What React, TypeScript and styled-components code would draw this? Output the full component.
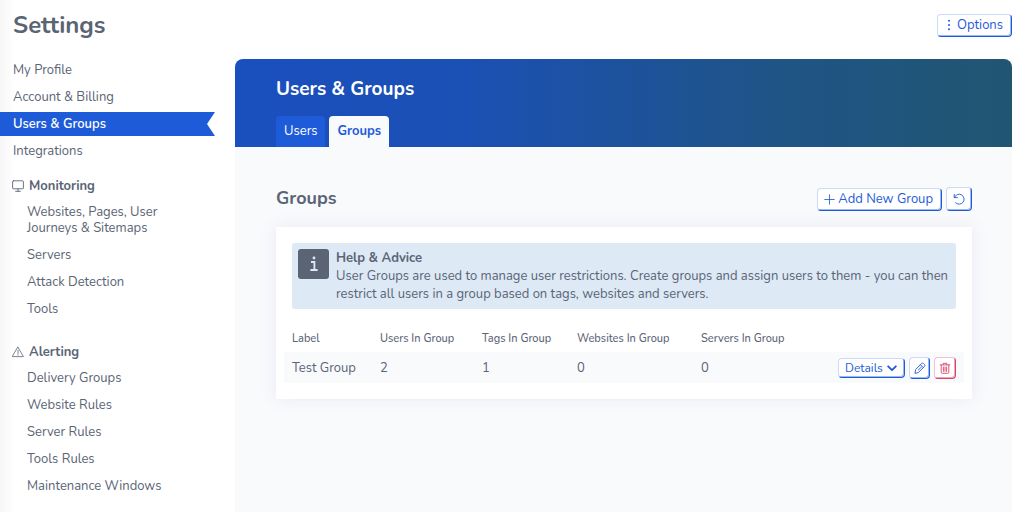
import React from "react";
import styled, { createGlobalStyle, css } from "styled-components";

const font = `Nunito, "Open Sans", "Noto Sans", sans-serif`;
const blue = "#1d5bd8";
const slate = "#5a6475";
const pale = "#f9fafc";
const red = "#d6456b";

const GlobalStyle = createGlobalStyle`
  *, *::before, *::after { box-sizing: border-box; }
  body { margin: 0; background: #fff; color: ${slate}; font-family: ${font}; font-size: 13px; line-height: 18px; }
  h1, h2, h3, p { margin: 0; }
  a { color: inherit; text-decoration: none; }
  button { font-family: inherit; cursor: pointer; }
`;

const Page = styled.div`
  display: flex;
  flex-direction: column;
  min-height: 100vh;
  background: linear-gradient(to right, #f6f6f6, #fff 14px);
`;

const TopBar = styled.header`
  display: flex;
  align-items: center;
  justify-content: space-between;
  height: 50px;
  padding: 0 12px 0 13px;
`;

const PageTitle = styled.h1`
  font-size: 24px;
  line-height: 30px;
  font-weight: 700;
`;

const Columns = styled.div`
  display: flex;
  flex: 1;
  padding: 8px 12px 0 0;
`;

const Sidebar = styled.nav`
  flex: 0 0 215px;
  margin-right: 20px;
  padding-bottom: 12px;
`;

const NavList = styled.ul`
  display: flex;
  flex-direction: column;
  gap: 3px;
  margin: 0;
  padding: 0;
  list-style: none;
`;

const NavLink = styled.a<{ $nested?: boolean; $active?: boolean }>`
  display: block;
  padding: 4px 40px 4px ${(p) => (p.$nested ? 27 : 13)}px;
  line-height: 16px;
  ${(p) =>
    p.$active &&
    css`
      background: ${blue};
      color: #fff;
      font-weight: 600;
      clip-path: polygon(0 0, 100% 0, calc(100% - 8px) 50%, 100% 100%, 0 100%);
    `}
`;

const NavHeading = styled.h2<{ $gap: number }>`
  display: flex;
  align-items: center;
  gap: 5px;
  margin: ${(p) => p.$gap}px 0 2px;
  padding: 4px 12px;
  font-size: 13px;
  line-height: 16px;
  font-weight: 700;
`;

const Panel = styled.main`
  flex: 1;
  min-width: 0;
  margin-top: 1px;
  border-radius: 8px 8px 0 0;
  overflow: hidden;
  background: ${pale};
`;

const Banner = styled.div`
  padding: 17px 40px 0 41px;
  background: linear-gradient(to right, #1a4fbf, #1b50b4 30%, #1f5488 68%, #215672);
`;

const BannerTitle = styled.h2`
  color: #fff;
  font-size: 19px;
  line-height: 26px;
  font-weight: 700;
`;

const Tabs = styled.div`
  display: flex;
  gap: 4px;
  margin-top: 14px;
`;

const Tab = styled.button<{ $active?: boolean }>`
  height: 31px;
  padding: 0 8px 2px;
  border: 0;
  border-radius: 4px 4px 0 0;
  background: ${(p) => (p.$active ? pale : blue)};
  color: ${(p) => (p.$active ? blue : "#fff")};
  font-size: 13px;
  font-weight: ${(p) => (p.$active ? 700 : 400)};
`;

const Section = styled.section`
  padding: 40px 40px 40px 41px;
`;

const SectionHead = styled.div`
  display: flex;
  align-items: center;
  justify-content: space-between;
  height: 24px;
  margin-bottom: 16px;
`;

const SectionTitle = styled.h3`
  font-size: 18px;
  line-height: 22px;
  padding-bottom: 2px;
  font-weight: 700;
`;

const Actions = styled.div`
  display: flex;
  align-items: center;
  justify-content: flex-end;
  gap: 4px;
`;

const Button = styled.button<{ $danger?: boolean; $small?: boolean }>`
  display: inline-flex;
  align-items: center;
  justify-content: center;
  gap: ${(p) => (p.$small ? 4 : 3)}px;
  height: ${(p) => (p.$small ? 20 : 23)}px;
  padding: 0 ${(p) => (p.$small ? 7 : 8)}px 0 ${(p) => (p.$small ? 6 : 6)}px;
  border: 1px solid;
  border-color: ${(p) =>
    p.$danger ? `#f5c0cf ${red} ${red} #f5c0cf` : `#c9dafa ${blue} ${blue} #c9dafa`};
  border-radius: 4px;
  box-shadow: inset -1px -1px 0 ${(p) => (p.$danger ? "#eea5b8" : "#9dbaf0")};
  background: #fff;
  color: ${(p) => (p.$danger ? red : blue)};
  font-size: ${(p) => (p.$small ? 12 : 13)}px;
  line-height: 18px;
  white-space: nowrap;
`;

const IconButton = styled(Button)`
  width: ${(p) => (p.$small ? 22 : 26)}px;
  height: ${(p) => (p.$small ? 22 : 24)}px;
  padding: 0;
`;

const Card = styled.div`
  padding: 16px 8px;
  background: #fff;
  box-shadow: 0 0 16px rgba(50, 80, 140, 0.09);
`;

const Advice = styled.div`
  display: flex;
  align-items: flex-start;
  gap: 7px;
  margin: 0 8px 17px;
  padding: 6px 6px 6px;
  border-radius: 3px;
  background: #dde9f5;
`;

const AdviceIcon = styled.span`
  display: flex;
  align-items: center;
  justify-content: center;
  flex: 0 0 31px;
  height: 30px;
  border-radius: 3px;
  background: ${slate};
  color: #dde9f5;
`;

const AdviceText = styled.p`
  line-height: 18px;
`;

const Table = styled.table`
  width: 100%;
  table-layout: fixed;
  border-collapse: collapse;
  text-align: left;
`;

const Col = styled.col<{ $w?: number }>`
  width: ${(p) => (p.$w ? `${p.$w}px` : "auto")};
`;

const Th = styled.th`
  height: 26px;
  padding: 0 8px;
  font-size: 11px;
  font-weight: 500;
  white-space: nowrap;
`;

const Td = styled.td`
  height: 31px;
  padding: 0 8px;
  background: ${pale};
  white-space: nowrap;
`;

const Svg = ({ size = 12, w = 1, children }: { size?: number; w?: number; children: React.ReactNode }) => (
  <svg
    width={size}
    height={size}
    viewBox="0 0 12 12"
    fill="none"
    stroke="currentColor"
    strokeWidth={w}
    strokeLinecap="round"
    strokeLinejoin="round"
    aria-hidden="true"
  >
    {children}
  </svg>
);

const MonitorIcon = () => (
  <Svg w={0.9}>
    <rect x="0.6" y="0.8" width="10.8" height="8" rx="0.8" />
    <path d="M6 8.8v2.4M3.6 11.3h4.8" />
  </Svg>
);

const WarningIcon = () => (
  <Svg w={0.8}>
    <path d="M6 1.2 11.4 10.6H.6ZM6 4.2v3.6M6 9v.2" />
  </Svg>
);

const DotsIcon = () => (
  <svg width="10" height="12" viewBox="0 0 10 12" fill="currentColor" aria-hidden="true">
    <circle cx="5" cy="1.8" r="1" />
    <circle cx="5" cy="6" r="1" />
    <circle cx="5" cy="10.2" r="1" />
  </svg>
);

const PlusIcon = () => (
  <Svg size={11} w={0.9}>
    <path d="M6 .8v10.4M.8 6h10.4" />
  </Svg>
);

const ResetIcon = () => (
  <Svg w={0.9}>
    <path d="M1.2 1.4v3.2h3.2M1.4 4.4A5 5 0 1 1 2.6 9.8" />
  </Svg>
);

const ChevronIcon = () => (
  <Svg size={10} w={2.2}>
    <path d="M1.4 4 6 8.6 10.6 4" />
  </Svg>
);

const PencilIcon = () => (
  <Svg w={0.9}>
    <path d="M1 11l.7-3.6L7.6 1.5a1.3 1.3 0 0 1 1.9 0l1 1a1.3 1.3 0 0 1 0 1.9L4.6 10.3ZM6.4 2.7 9.3 5.6M7.4 5 4.4 8" />
  </Svg>
);

const TrashIcon = () => (
  <Svg w={0.9}>
    <path d="M1.2 2.9h9.6M4.2 2.7V1.3h3.6v1.4M2.2 3v7.2q0 1.1 1.1 1.1h5.4q1.1 0 1.1-1.1V3M4.4 5v4.4M6 5v4.4M7.6 5v4.4" />
  </Svg>
);

const InfoIcon = () => (
  <svg width="10" height="16" viewBox="0 0 10 16" fill="none" stroke="currentColor" strokeWidth="1.8" aria-hidden="true">
    <path d="M2 6h3.4v8M1.4 14h7.2" />
    <circle cx="5" cy="2" r="1.4" fill="currentColor" stroke="none" />
  </svg>
);

const accountLinks = ["My Profile", "Account & Billing", "Users & Groups", "Integrations"];
const monitoringLinks = ["Websites, Pages, User Journeys & Sitemaps", "Servers", "Attack Detection", "Tools"];
const alertingLinks = ["Delivery Groups", "Website Rules", "Server Rules", "Tools Rules", "Maintenance Windows"];

const Links = ({ items, nested, active }: { items: string[]; nested?: boolean; active?: string }) => (
  <NavList>
    {items.map((item) => (
      <li key={item}>
        <NavLink href="#" $nested={nested} $active={item === active} aria-current={item === active ? "page" : undefined}>
          {item}
        </NavLink>
      </li>
    ))}
  </NavList>
);

const columns = ["Label", "Users In Group", "Tags In Group", "Websites In Group", "Servers In Group"];
const columnWidths = [88, 102, 95, 124];
const groups = [{ label: "Test Group", users: 2, tags: 1, websites: 0, servers: 0 }];

export default function App() {
  return (
    <Page>
      <GlobalStyle />
      <TopBar>
        <PageTitle>Settings</PageTitle>
        <Button><DotsIcon />Options</Button>
      </TopBar>
      <Columns>
        <Sidebar aria-label="Settings">
          <Links items={accountLinks} active="Users & Groups" />
          <NavHeading $gap={11}><MonitorIcon />Monitoring</NavHeading>
          <Links items={monitoringLinks} nested />
          <NavHeading $gap={19}><WarningIcon />Alerting</NavHeading>
          <Links items={alertingLinks} nested />
        </Sidebar>
        <Panel>
          <Banner>
            <BannerTitle>Users &amp; Groups</BannerTitle>
            <Tabs role="tablist">
              <Tab role="tab" aria-selected={false}>Users</Tab>
              <Tab role="tab" aria-selected $active>Groups</Tab>
            </Tabs>
          </Banner>
          <Section>
            <SectionHead>
              <SectionTitle>Groups</SectionTitle>
              <Actions>
                <Button><PlusIcon />Add New Group</Button>
                <IconButton aria-label="Refresh"><ResetIcon /></IconButton>
              </Actions>
            </SectionHead>
            <Card>
              <Advice>
                <AdviceIcon><InfoIcon /></AdviceIcon>
                <AdviceText>
                  <strong>Help &amp; Advice</strong>
                  <br />
                  User Groups are used to manage user restrictions. Create groups and assign users to them - you can then
                  restrict all users in a group based on tags, websites and servers.
                </AdviceText>
              </Advice>
              <Table>
                <colgroup>
                  {columnWidths.map((w) => <Col key={w} $w={w} />)}
                  <Col />
                  <Col $w={134} />
                </colgroup>
                <thead>
                  <tr>
                    {columns.map((c) => <Th key={c} scope="col">{c}</Th>)}
                    <Th as="td" />
                  </tr>
                </thead>
                <tbody>
                  {groups.map((g) => (
                    <tr key={g.label}>
                      <Td>{g.label}</Td>
                      <Td>{g.users}</Td>
                      <Td>{g.tags}</Td>
                      <Td>{g.websites}</Td>
                      <Td>{g.servers}</Td>
                      <Td>
                        <Actions>
                          <Button $small>Details<ChevronIcon /></Button>
                          <IconButton $small aria-label="Edit group"><PencilIcon /></IconButton>
                          <IconButton $small $danger aria-label="Delete group"><TrashIcon /></IconButton>
                        </Actions>
                      </Td>
                    </tr>
                  ))}
                </tbody>
              </Table>
            </Card>
          </Section>
        </Panel>
      </Columns>
    </Page>
  );
}
